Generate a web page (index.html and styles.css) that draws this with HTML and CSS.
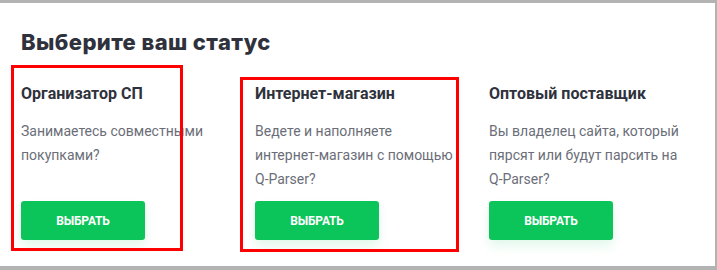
FILE: index.html
```html
<!DOCTYPE html>
<html lang="ru">
<head>
<meta charset="utf-8">
<link rel="stylesheet" href="styles.css">
</head>
<body>
<div class="frame">
  <div class="panel">
    <h1 class="title">Выберите ваш статус</h1>
    <div class="cols">
      <div class="col">
        <h2 class="col-title">Организатор СП</h2>
        <p class="col-text">Занимаетесь совместными покупками?</p>
        <button class="btn">ВЫБРАТЬ</button>
      </div>
      <div class="col">
        <h2 class="col-title">Интернет-магазин</h2>
        <p class="col-text">Ведете и наполняете<br>интернет-магазин с помощью Q-Parser?</p>
        <button class="btn">ВЫБРАТЬ</button>
      </div>
      <div class="col">
        <h2 class="col-title">Оптовый поставщик</h2>
        <p class="col-text">Вы владелец сайта, который пярсят или будут парсить на Q-Parser?</p>
        <button class="btn">ВЫБРАТЬ</button>
      </div>
    </div>
    <div class="mark mark-1"></div>
    <div class="mark mark-2"></div>
  </div>
</div>
</body>
</html>
```
FILE: styles.css
```css
* { box-sizing: border-box; }
html, body { margin: 0; padding: 0; }
body {
  width: 717px;
  height: 270px;
  overflow: hidden;
  background: #b3b3b3;
  font-family: Roboto, "Liberation Sans", sans-serif;
}
.frame {
  padding-top: 3px;
  width: 717px;
  height: 270px;
}
.panel {
  position: relative;
  width: 715px;
  height: 263px;
  background: #fff;
  padding: 27px 0 0 21px;
}
.title {
  margin: 0;
  font-family: Inter, "Noto Sans", sans-serif;
  font-weight: 800;
  font-size: 22px;
  line-height: 24px;
  color: #2f323c;
  letter-spacing: 0.4px;
}
.cols {
  display: flex;
  margin-top: 29px;
}
.col {
  width: 234px;
  flex: none;
}
.col-title {
  margin: 0;
  font-size: 16px;
  font-weight: 700;
  line-height: 22px;
  color: #2f323c;
}
.col-text {
  margin: 14px 0 0;
  font-size: 14px;
  line-height: 24px;
  color: #6b6e78;
  width: 205px;
  height: 72px;
}
.btn {
  display: block;
  margin-top: 10px;
  width: 124px;
  height: 39px;
  border: 0;
  border-radius: 3px;
  background: #0bc45a;
  color: #fff;
  font-family: Roboto, "Liberation Sans", sans-serif;
  font-weight: 700;
  font-size: 12px;
  letter-spacing: -0.2px;
  box-shadow: 0 6px 12px rgba(11, 196, 90, 0.12);
}
.mark {
  position: absolute;
  border: 3px solid #ff0000;
}
.mark-1 { left: 11px; top: 62px; width: 172px; height: 186px; }
.mark-2 { left: 240px; top: 74px; width: 219px; height: 175px; }
```
